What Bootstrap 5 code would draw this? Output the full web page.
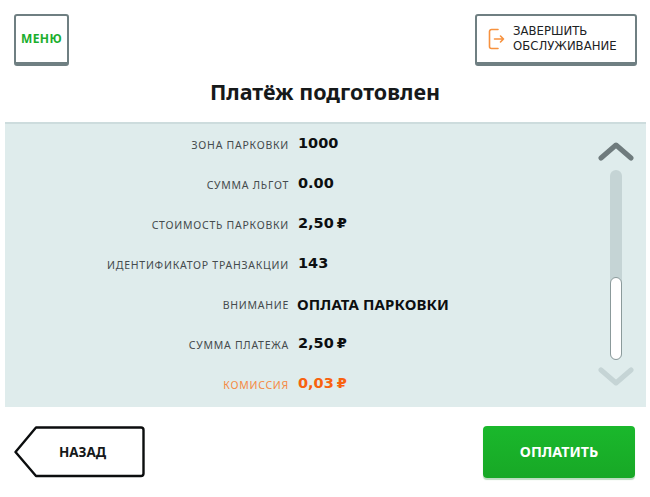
<!DOCTYPE html>
<html lang="ru">
<head>
    <meta charset="UTF-8">
    <meta name="viewport" content="width=device-width, initial-scale=1.0">
    <title>Платёж подготовлен</title>
    <link href="https://cdn.jsdelivr.net/npm/bootstrap@5.3.0/dist/css/bootstrap.min.css" rel="stylesheet">
    <style>
        body {
            font-family: "Noto Sans", "DejaVu Sans", sans-serif;
            background-color: #fff;
            width: 650px;
            height: 497px;
            overflow: hidden;
        }
        .top-bar {
            padding: 14px 13px 0 14px;
            height: 66px;
        }
        .kiosk-btn {
            height: 52px;
            background: #fff;
            border: 2px solid #6f7f82;
            border-bottom-width: 4px;
            border-radius: 3px;
            padding: 0;
        }
        .menu-btn {
            width: 55px;
            color: #1aae2d;
            font-size: 12px;
            font-weight: 700;
            letter-spacing: .4px;
        }
        .finish-btn {
            width: 162px;
            color: #1d2224;
            font-family: "DejaVu Sans", sans-serif;
            font-size: 11.7px;
            line-height: 15px;
            text-align: left;
            padding-left: 11px;
            gap: 8px;
        }
        .page-title {
            font-size: 21.5px;
            font-weight: 700;
            color: #16191a;
            margin: 0;
            height: 56px;
            line-height: 52px;
            text-align: center;
        }
        .info-panel {
            margin-left: 5px;
            width: 641px;
            height: 285px;
            background: #dfecec;
            border-top: 2px solid #cddcdd;
            padding-top: 0;
        }
        .info-row {
            height: 40px;
            align-items: center;
        }
        .info-label {
            width: 284px;
            text-align: right;
            font-size: 10.5px;
            letter-spacing: .75px;
            color: #454b4d;
            padding-top: 3px;
        }
        .info-value {
            margin-left: 8px;
            font-size: 15px;
            letter-spacing: .1px;
            font-weight: 700;
            color: #0c0f10;
        }
        .num-value {
            font-family: "DejaVu Sans", sans-serif;
            font-size: 14.5px;
            letter-spacing: 0;
            margin-left: 9px;
            word-spacing: -2px;
        }
        .row-orange .info-label { color: #f58a45; }
        .row-orange .info-value { color: #f8620f; }
        .scroll-col {
            position: absolute;
            left: 598px;
            top: 122px;
            width: 36px;
            height: 285px;
        }
        .scroll-track {
            position: absolute;
            left: 12px;
            top: 48px;
            width: 12px;
            height: 190px;
            background: #c5d4d5;
            border-radius: 6px;
        }
        .scroll-thumb {
            position: absolute;
            left: 12px;
            top: 155px;
            width: 12px;
            height: 83px;
            background: #fff;
            border: 1px solid #8b9a9b;
            border-radius: 6px;
        }
        .scroll-up { position: absolute; left: 0; top: 18px; }
        .scroll-down { position: absolute; left: 0; top: 244px; }
        .bottom-bar {
            padding: 19px 15px 0 14px;
        }
        .back-btn {
            width: 131px;
            height: 52px;
            background: none;
            border: 0;
            padding: 0 0 0 6px;
            position: relative;
            font-size: 13.4px;
            font-weight: 700;
            color: #15181a;
        }
        .back-btn svg { position: absolute; left: 0; top: 0; }
        .back-btn span { position: relative; }
        .pay-btn {
            width: 152px;
            height: 52px;
            background: linear-gradient(#1ab82c, #18a826);
            border: 0;
            border-radius: 4px;
            box-shadow: 0 2px 1px #bcdcc0;
            color: #fff;
            font-size: 14.3px;
            font-weight: 700;
        }
    </style>
</head>
<body>
    <div class="top-bar d-flex justify-content-between">
        <button class="kiosk-btn menu-btn">МЕНЮ</button>
        <button class="kiosk-btn finish-btn d-flex align-items-center">
            <svg width="17" height="22" viewBox="0 0 17 22" fill="none" stroke="#f7923f" stroke-width="1.6" stroke-linecap="round" stroke-linejoin="round">
                <path d="M10 1.5H3.5A2 2 0 0 0 1.5 3.5V18.5A2 2 0 0 0 3.5 20.5H10"/>
                <path d="M6.5 11H15.5M12.5 8L15.5 11L12.5 14"/>
            </svg>
            <span>ЗАВЕРШИТЬ<br>ОБСЛУЖИВАНИЕ</span>
        </button>
    </div>

    <h1 class="page-title">Платёж подготовлен</h1>

    <div class="info-panel">
        <div class="info-row d-flex"><div class="info-label">ЗОНА ПАРКОВКИ</div><div class="info-value num-value">1000</div></div>
        <div class="info-row d-flex"><div class="info-label">СУММА ЛЬГОТ</div><div class="info-value num-value">0.00</div></div>
        <div class="info-row d-flex"><div class="info-label">СТОИМОСТЬ ПАРКОВКИ</div><div class="info-value num-value">2,50 ₽</div></div>
        <div class="info-row d-flex"><div class="info-label">ИДЕНТИФИКАТОР ТРАНЗАКЦИИ</div><div class="info-value num-value">143</div></div>
        <div class="info-row d-flex"><div class="info-label">ВНИМАНИЕ</div><div class="info-value">ОПЛАТА ПАРКОВКИ</div></div>
        <div class="info-row d-flex"><div class="info-label">СУММА ПЛАТЕЖА</div><div class="info-value num-value">2,50 ₽</div></div>
        <div class="info-row d-flex row-orange"><div class="info-label">КОМИССИЯ</div><div class="info-value num-value">0,03 ₽</div></div>
    </div>

    <div class="scroll-col">
        <svg class="scroll-up" width="36" height="22" viewBox="0 0 36 22" fill="none" stroke="#6f7b7d" stroke-width="5" stroke-linecap="round" stroke-linejoin="round"><path d="M3 18L18 5L33 18"/></svg>
        <div class="scroll-track"></div>
        <div class="scroll-thumb"></div>
        <svg class="scroll-down" width="36" height="22" viewBox="0 0 36 22" fill="none" stroke="#c5d4d5" stroke-width="5" stroke-linecap="round" stroke-linejoin="round"><path d="M3 4L18 17L33 4"/></svg>
    </div>

    <div class="bottom-bar d-flex justify-content-between">
        <button class="back-btn">
            <svg width="131" height="52" viewBox="0 0 131 52" fill="none" stroke="#0b0d0e" stroke-width="2.4" stroke-linejoin="round"><path d="M22 1.5H127A2.5 2.5 0 0 1 129.5 4V47.5A2.5 2.5 0 0 1 127 50H22L1.5 26Z"/></svg>
            <span>НАЗАД</span>
        </button>
        <button class="pay-btn">ОПЛАТИТЬ</button>
    </div>
</body>
</html>
